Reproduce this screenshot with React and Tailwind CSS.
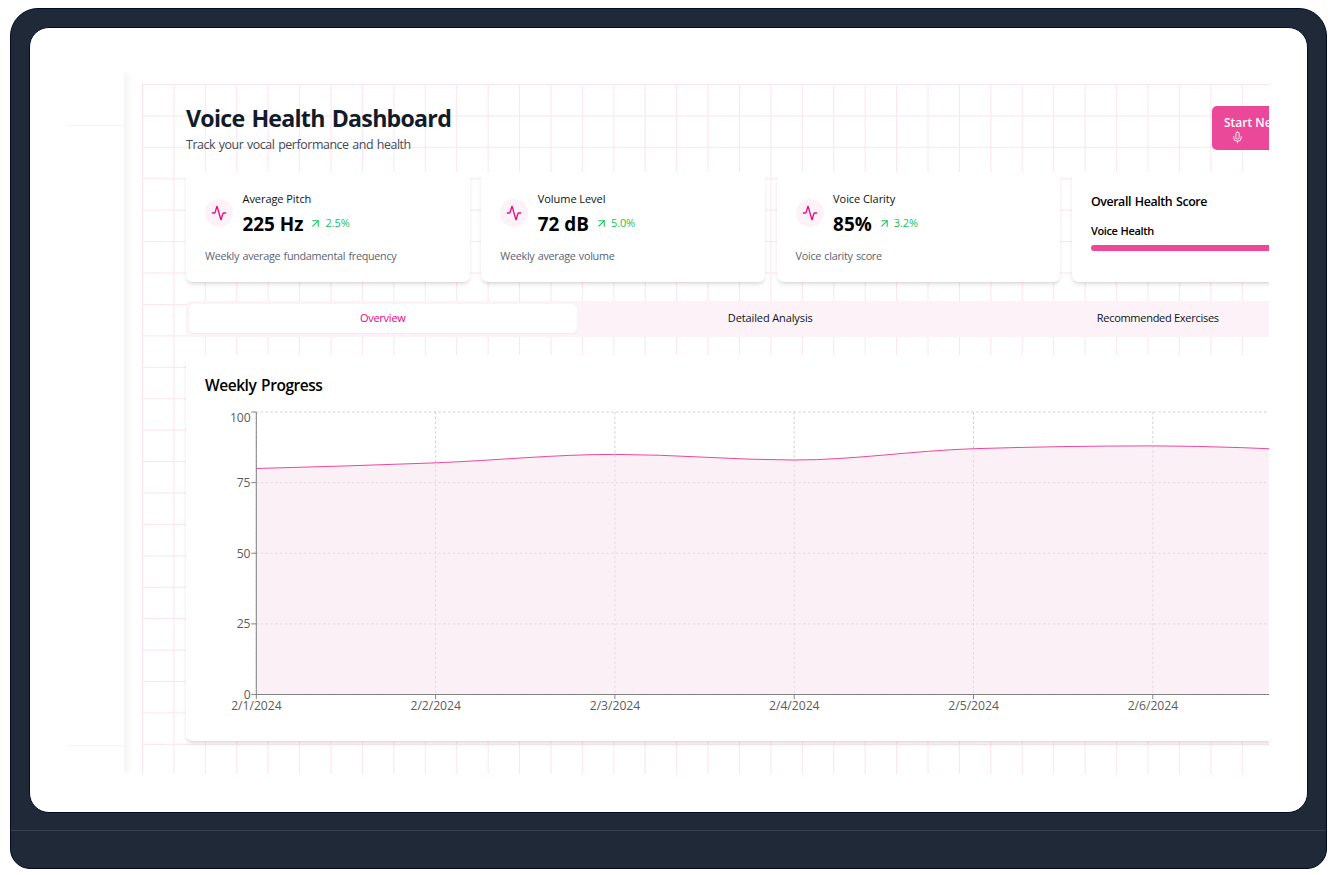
import { Activity, ArrowUpRight, Mic } from "lucide-react";

const stats = [
  { title: "Average Pitch", value: "225 Hz", change: "2.5%", note: "Weekly average fundamental frequency" },
  { title: "Volume Level", value: "72 dB", change: "5.0%", note: "Weekly average volume" },
  { title: "Voice Clarity", value: "85%", change: "3.2%", note: "Voice clarity score" },
];

const days = [
  { date: "2/1/2024", score: 80 },
  { date: "2/2/2024", score: 82 },
  { date: "2/3/2024", score: 85 },
  { date: "2/4/2024", score: 83 },
  { date: "2/5/2024", score: 87 },
  { date: "2/6/2024", score: 88 },
  { date: "2/7/2024", score: 86 },
];

const LEFT = 51;
const TOP = 12;
const BOTTOM = 294.5;
const STEP = 179.3;
const sx = (i) => LEFT + i * STEP;
const sy = (v) => BOTTOM - (v / 100) * (BOTTOM - TOP);

function monotonePath(points) {
  const slopes = [];
  for (let i = 0; i < points.length - 1; i++) {
    slopes.push((points[i + 1][1] - points[i][1]) / (points[i + 1][0] - points[i][0]));
  }
  const tangents = points.map((_, i) => {
    if (i === 0 || i === points.length - 1) return null;
    const a = slopes[i - 1];
    const b = slopes[i];
    if (a * b <= 0) return 0;
    return Math.sign(a) * 2 * Math.min(Math.abs(a), Math.abs(b), 0.25 * Math.abs(a + b));
  });
  tangents[0] = (3 * slopes[0] - tangents[1]) / 2;
  const last = points.length - 1;
  tangents[last] = (3 * slopes[last - 1] - tangents[last - 1]) / 2;
  let d = `M${points[0][0]},${points[0][1]}`;
  for (let i = 0; i < last; i++) {
    const [x0, y0] = points[i];
    const [x1, y1] = points[i + 1];
    const h = (x1 - x0) / 3;
    d += `C${x0 + h},${y0 + h * tangents[i]},${x1 - h},${y1 - h * tangents[i + 1]},${x1},${y1}`;
  }
  return d;
}

function StatCard({ title, value, change, note }) {
  return (
    <div className="h-[110px] w-[283.5px] shrink-0 rounded-[6.5px] bg-white px-[19px] pt-[17px] shadow-[0_3px_5px_-1px_rgba(0,0,0,0.12),0_2px_3px_-2px_rgba(0,0,0,0.12)]">
      <div className="flex items-start gap-[9.5px]">
        <div className="mt-[10px] flex size-7 items-center justify-center rounded-full bg-[#fdf2f8]">
          <Activity className="size-4 text-[#e60f86]" strokeWidth={2} />
        </div>
        <div>
          <div className="h-5 text-[11px] leading-[19px] font-medium tracking-[-0.06px] text-[#0b1220]">{title}</div>
          <div className="flex h-[30px] items-center">
            <span className="text-[18.9px] leading-[30px] font-bold text-black">{value}</span>
            <ArrowUpRight className="mb-px ml-[6px] size-[13px] text-[#16c25a]" strokeWidth={2} />
            <span className="mb-[2px] ml-[3px] text-[11px] font-medium tracking-[-0.1px] text-[#16c25a]">{change}</span>
          </div>
        </div>
      </div>
      <p className="mt-[9px] text-[10.8px] leading-4 tracking-[-0.29px] whitespace-nowrap text-[#5b6472] [word-spacing:0.8px]">{note}</p>
    </div>
  );
}

function Chart() {
  const line = monotonePath(days.map((d, i) => [sx(i), sy(d.score)]));
  const end = sx(days.length - 1);
  return (
    <svg className="block shrink-0" width="1140" height="320" viewBox="0 0 1140 320">
      <g stroke="#cbcbcb" strokeDasharray="2.4 2.4" strokeWidth="0.9">
        {[0, 25, 50, 75, 100].map((v) => (
          <line key={v} x1={LEFT} x2={end} y1={sy(v)} y2={sy(v)} />
        ))}
        {days.map((d, i) => (
          <line key={d.date} x1={sx(i) + 0.3} x2={sx(i) + 0.3} y1={TOP} y2={BOTTOM} />
        ))}
      </g>
      <path d={`${line}L${end},${BOTTOM}L${LEFT},${BOTTOM}Z`} fill="#f9e2f0" fillOpacity="0.52" />
      <path d={line} fill="none" stroke="#ec4899" strokeWidth="1" />
      <g stroke="#777" strokeWidth="0.9">
        <line x1={LEFT + 0.3} x2={LEFT + 0.3} y1={TOP} y2={BOTTOM} />
        <line x1={LEFT} x2={end} y1={BOTTOM} y2={BOTTOM} />
        {[0, 25, 50, 75, 100].map((v) => (
          <line key={v} x1={LEFT - 4.7} x2={LEFT} y1={sy(v)} y2={sy(v)} />
        ))}
        {days.map((d, i) => (
          <line key={d.date} x1={sx(i) + 0.3} x2={sx(i) + 0.3} y1={BOTTOM} y2={BOTTOM + 4.7} />
        ))}
      </g>
      <g fill="#5c5c5c" fontSize="12.2">
        {[0, 25, 50, 75, 100].map((v) => (
          <text key={v} x={LEFT - 5.5} y={v === 100 ? 22.3 : sy(v) + 4.5} textAnchor="end" className="tracking-[-0.1px]">{v}</text>
        ))}
        {days.map((d, i) => (
          <text key={d.date} x={sx(i) + 0.4} y="309.5" textAnchor="middle" textLength="50.5">{d.date}</text>
        ))}
      </g>
    </svg>
  );
}

export default function App() {
  return (
    <div className="h-[875px] w-[1331px] overflow-hidden bg-white pt-2 pl-[10px] font-['Open_Sans','Noto_Sans',sans-serif]">
      <div className="flex h-[861px] w-[1317px] flex-col rounded-t-[28px] rounded-b-[20px] border border-[#020c24] bg-[#202938] px-[18px] pt-[18px]">
        <div className="h-[786px] shrink-0 overflow-hidden rounded-[20px] border border-[#020c24] bg-white pt-[44px] pr-[38px] pl-[37px]">
          <div className="flex h-[702px] overflow-hidden">
            <aside className="flex w-[57px] shrink-0 flex-col justify-between pt-[53px] pb-[28px] shadow-[3px_0_8px_rgba(0,0,0,0.06)]">
              <div className="h-px bg-[#fdeef2]" />
              <div className="h-px bg-[#fdeef2]" />
            </aside>
            <main className="mt-3 ml-[18px] min-w-0 flex-1 overflow-hidden bg-[linear-gradient(to_right,#fde4ec_1px,transparent_1px),linear-gradient(to_bottom,#fde4ec_1px,transparent_1px)] bg-[size:31.43px_31.43px] pt-[22px] pl-[44px]">
              <div className="w-[1168px]">
                <header className="flex h-[66px]">
                  <div className="w-[1026px] shrink-0">
                    <h1 className="h-[26px] text-[23.2px] leading-[24px] font-bold tracking-[-0.76px] whitespace-nowrap text-[#111c2b] [word-spacing:1.8px]">Voice Health Dashboard</h1>
                    <p className="mt-[3px] text-[12.4px] leading-[19px] tracking-[-0.43px] whitespace-nowrap text-[#414b5a] [word-spacing:0.9px]">Track your vocal performance and health</p>
                  </div>
                  <button className="h-[44px] w-[142px] shrink-0 rounded-[5px] bg-[#ec4899] pt-[2px] pl-3 text-left text-[12px] font-semibold whitespace-nowrap text-white">
                    <span className="block leading-4">Start New Recording</span>
                    <Mic className="ml-[6.5px] size-[13px]" strokeWidth={1.7} />
                  </button>
                </header>
                <section className="flex gap-[11.8px]">
                  {stats.map((s) => (
                    <StatCard key={s.title} {...s} />
                  ))}
                  <div className="h-[110px] w-[283.5px] shrink-0 rounded-[6.5px] bg-white px-[19px] pt-5 shadow-[0_3px_5px_-1px_rgba(0,0,0,0.12),0_2px_3px_-2px_rgba(0,0,0,0.12)]">
                    <h2 className="text-[12.4px] leading-5 font-semibold tracking-[-0.41px] text-black [word-spacing:1px]">Overall Health Score</h2>
                    <p className="mt-[10px] text-[11px] leading-[18px] font-semibold tracking-[-0.36px] text-black [word-spacing:0.5px]">Voice Health</p>
                    <div className="mt-[5px] h-[6px] rounded-full bg-[#ec4899]" />
                  </div>
                </section>
                <nav className="mt-[19px] flex h-9 rounded-[5px] bg-[#fdf2f8] p-[3px] pb-1 text-[11px] font-medium text-[#0b1220]">
                  <div className="flex w-[387.5px] shrink-0 items-center justify-center rounded-[5px] bg-white tracking-[-0.25px] text-[#e6057f] shadow-[0_1px_1px_rgba(0,0,0,0.04)]">Overview</div>
                  <div className="flex w-[387.5px] shrink-0 items-center justify-center tracking-[-0.12px]">Detailed Analysis</div>
                  <div className="flex w-[387.5px] shrink-0 items-center justify-center tracking-[-0.28px]">Recommended Exercises</div>
                </nav>
                <section className="mt-[18px] h-[386px] rounded-[6.5px] bg-white shadow-[0_3px_5px_-1px_rgba(0,0,0,0.12),0_2px_3px_-2px_rgba(0,0,0,0.12)]">
                  <div className="h-[45px] pt-[18px] pl-[19px]">
                    <h2 className="text-[15.5px] leading-6 font-semibold tracking-[-0.45px] text-black [word-spacing:1.2px]">Weekly Progress</h2>
                  </div>
                  <div className="ml-[19px] overflow-hidden">
                    <Chart />
                  </div>
                </section>
              </div>
            </main>
          </div>
        </div>
        <div className="mt-[17px] -mr-[18px] -ml-[18px] h-px bg-[#364152]" />
      </div>
    </div>
  );
}
